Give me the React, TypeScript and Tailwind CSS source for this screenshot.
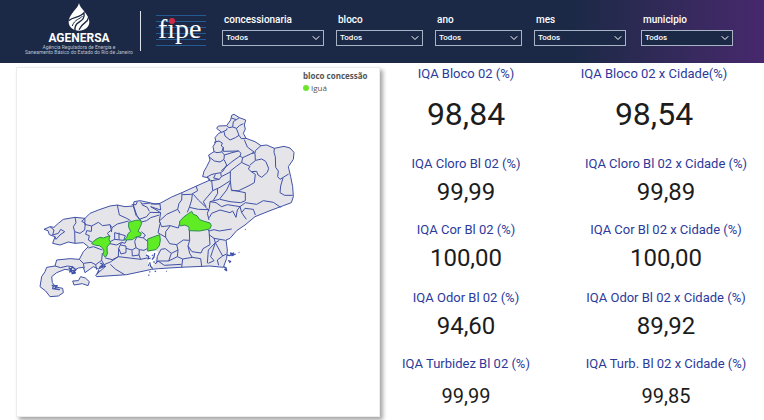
import { ChevronDown } from 'lucide-react'

const FILTERS = [
  { id: 'concessionaria', width: 'w-[102px]', margin: '' },
  { id: 'bloco', width: 'w-[87px]', margin: '' },
  { id: 'ano', width: 'w-[87px]', margin: '' },
  { id: 'mes', width: 'w-[92px]', margin: '' },
  { id: 'municipio', width: 'w-[92px]', margin: 'ml-[3px]' },
]

const ROWS = [
  {
    bloco: ['IQA Bloco 02 (%)', '98,84'],
    cidade: ['IQA Bloco 02 x Cidade(%)', '98,54'],
    row: 'h-[90px]',
    value: 'text-[32px] leading-10 mt-3',
    shift: 'pr-6',
  },
  {
    bloco: ['IQA Cloro Bl 02 (%)', '99,99'],
    cidade: ['IQA Cloro Bl 02 x Cidade (%)', '99,89'],
    row: 'h-[66px]',
    value: 'text-2xl mt-1',
    shift: '',
  },
  {
    bloco: ['IQA Cor Bl 02 (%)', '100,00'],
    cidade: ['IQA Cor Bl 02 x Cidade (%)', '100,00'],
    row: 'h-[68px]',
    value: 'text-2xl mt-1',
    shift: '',
  },
  {
    bloco: ['IQA Odor Bl 02 (%)', '94,60'],
    cidade: ['IQA Odor Bl 02 x Cidade (%)', '89,92'],
    row: 'h-[66px]',
    value: 'text-2xl mt-1',
    shift: '',
  },
  {
    bloco: ['IQA Turbidez Bl 02 (%)', '99,99'],
    cidade: ['IQA Turb. Bl 02 x Cidade (%)', '99,85'],
    row: 'h-[56px]',
    value: 'text-xl leading-8 mt-2',
    shift: '',
  },
]

export default function App() {
  return (
    <div className="min-h-screen flex flex-col bg-white font-['Roboto','Liberation_Sans',sans-serif]">
      <Header />
      <main className="flex-1 grid grid-cols-[95fr_96fr]">
        <div className="pl-4 pt-1 pb-[3px] flex">
          <MapCard />
        </div>
        <section className="pt-[3px]">
          {ROWS.map(r => (
            <div key={r.bloco[0]} className={`grid grid-cols-[43fr_53fr] ${r.row}`}>
              <Metric label={r.bloco[0]} value={r.bloco[1]} size={r.value} />
              <div className={`pl-4 ${r.shift}`}>
                <Metric label={r.cidade[0]} value={r.cidade[1]} size={r.value} />
              </div>
            </div>
          ))}
        </section>
      </main>
    </div>
  )
}

function Header() {
  return (
    <header className="h-[63px] flex items-start text-white bg-linear-to-r from-[#1b2946] from-75% to-[#47286d]">
      <div className="w-[130px] ml-[14px] pt-[3px] flex flex-col items-center">
        <AgenersaMark />
        <div className="text-xs leading-3 font-bold mt-px">AGENERSA</div>
        <p className="text-[5px] leading-[5px] text-center text-[#b9c2d2] mt-px whitespace-nowrap">
          Agência Reguladora de Energia e<br />
          Saneamento Básico do Estado do Rio de Janeiro
        </p>
      </div>
      <div className="w-px h-10 mt-[11px] -ml-1 bg-[#dfe4ec]" />
      <FipeLogo />
      <form className="flex gap-3 ml-4 pt-[14px]">
        {FILTERS.map(f => (
          <div key={f.id} className={`${f.width} ${f.margin}`}>
            <label htmlFor={f.id} className="block text-[10px] leading-3 font-medium pl-0.5 mb-1">{f.id}</label>
            <div className="relative">
              <select id={f.id} className="block appearance-none w-full h-4 px-[3px] border border-[#a9b3c6] bg-[#1b2946] text-[8px] leading-3 font-medium text-white">
                <option>Todos</option>
              </select>
              <ChevronDown className="absolute right-0.5 top-0.5 size-3 pointer-events-none" strokeWidth={2} />
            </div>
          </div>
        ))}
      </form>
    </header>
  )
}

function AgenersaMark() {
  return (
    <svg viewBox="0 0 66 84" className="w-[22px] h-7" aria-hidden="true">
      <path d="M33 0C31 16 2 34 2 56c0 16 14 27 31 27s31-11 31-27C64 34 35 16 33 0Z" fill="#fff" />
      <g fill="none" stroke="#1b2946" strokeLinecap="round">
        <path d="M4 52C16 41 37 45 48 29C51 48 41 52 31 59C24 64 20 71 21 81" strokeWidth="4" />
        <path d="M43 40C36 49 20 48 13 68" strokeWidth="3" />
        <path d="M61 44C60 60 44 56 34 79" strokeWidth="4" />
      </g>
    </svg>
  )
}

function FipeLogo() {
  return (
    <svg viewBox="0 0 50 34" className="w-[50px] h-[34px] ml-[15px] mt-[14px]" role="img" aria-label="fipe">
      <path d="M0 1.5h50M0 7.5h50M0 13.5h50M0 19.5h50M0 25.5h50M0 31.5h50" stroke="#245c92" strokeWidth="1" />
      <text x="2" y="24" fill="#fff" fontSize="28" fontFamily="Liberation Serif, serif">fipe</text>
      <circle cx="16" cy="7" r="3" fill="#d12b45" />
    </svg>
  )
}

function Metric({ label, value, size }: { label: string; value: string; size: string }) {
  return (
    <div className="text-center">
      <h2 className="text-[13px] leading-4 text-[#2c3a9b] whitespace-nowrap">{label}</h2>
      <div className={`text-[#1c1c1c] ${size}`}>{value}</div>
    </div>
  )
}

function MapCard() {
  return (
    <section className="flex-1 bg-white border border-[#ececec] shadow-[3px_3px_4px_#a8a8a8]">
      <div className="w-[76px] ml-auto pt-0.5 text-[8px] leading-3 text-[#555] font-['Open_Sans',sans-serif] whitespace-nowrap">
        <h2 className="font-bold">bloco concessão</h2>
        <div className="flex items-center gap-0.5">
          <span className="size-1.5 rounded-full bg-[#6de52b]" />
          Iguá
        </div>
      </div>
      <RioMap />
    </section>
  )
}

function RioMap() {
  return (
    <svg viewBox="0 0 840 615" className="w-[280px] ml-[13px] mt-[11px]" role="img" aria-label="Mapa do estado do Rio de Janeiro">
      <g stroke="#4052a8" strokeWidth="3" strokeLinejoin="round" fill="none">
        <path
          fill="#e5e4e8"
          d="M612 28L628 38L647 45L643 60L646 72L640 85L648 100L675 110L693 122L710 120L733 130L762 124L780 129L792 142L790 163L775 185L782 215L788 245L790 275L784 293L760 302L720 317L675 335L645 360L620 377L600 400L588 405L592 435L590 460L580 487L540 483L450 487L385 491L365 493L290 509L200 515L197 510L228 483L205 492L190 485L165 503L160 487L145 489L130 497L105 493L80 503L65 515L67 533L77 546L98 550L100 563L85 573L60 575L47 558L30 545L35 515L45 500L50 487L75 483L80 465L120 461L148 463L160 440L175 425L160 413L135 415L115 411L90 420L68 415L75 395L58 389L54 377L42 373L60 365L72 367L85 355L100 343L135 337L165 340L180 325L205 315L240 303L262 300L285 305L310 303L312 290L330 287L350 291L375 297L390 295L425 276L458 262L495 245L540 225L535 218L518 215L522 199L530 185L540 165L536 150L552 140L549 125L558 110L555 98L566 85L575 82L560 70L565 63L590 62L602 45L605 31Z"
        />
        {/* oeste */}
        <g transform="translate(0 225)">
          <path d="M60 140L72 150L68 165L85 160L92 148L104 155L90 165L78 178L75 170M135 112L138 128L130 140L134 155L150 160L164 150L166 130L155 124L165 115M134 155L135 190M165 115L164 133L185 138L205 127L218 137L240 134L244 150L232 160L240 170M185 138L184 154L170 152L167 163L178 167L175 180L187 187M262 75L268 105L290 115L302 122M246 143L240 134M246 143L262 132L296 123M310 78L318 106L333 122M246 143L244 156M254 158V178L281 181L286 167L254 158M267 158V179M254 178L240 185M240 191L260 195L275 187L266 205L265 230L247 239L226 234M275 187L285 190L290 180M272 195L288 198V218L273 222L266 205M288 205L306 210L318 203L328 209L327 225L307 228L306 211M318 203L314 184L321 170L340 174M334 155L346 165L340 174L353 184M327 225L332 238L365 231M217 210L190 200L175 204M148 238L160 250L183 247L197 254L215 241L217 219M160 250L163 265M197 254L200 269M75 258L92 263L112 258L127 260M215 241L222 254L241 246L265 230L332 238M241 253L257 268L284 284M328 209L342 211L351 206M360 228L367 268" />
          <path fill="#e5e4e8" d="M128 303L145 302L152 290L166 294L178 305L174 317L157 311L132 315Z" />
          <path strokeWidth="4" d="M116 263l7 5l-4 8l11-5l6 8l-10 2l12-12l-11-9l-5 12l8 10M65 315l8 3l9-1l-8 9l14 3l-20-3l2-10M211 249l8 5l-10 8l16-5M207 269l-6 14" />
        </g>
        {/* norte */}
        <g transform="translate(390 0)">
          <path d="M214 39L229 44L238 38M229 44L220 50L218 66L230 70L238 62L250 56M200 62L207 68L218 66M185 82L200 75L201 70M192 80L195 93L210 105L226 98L237 91L229 70M237 91L244 101L258 100M162 112L177 108L187 114L184 123L190 127L185 141L171 143L162 140M190 127L190 139L236 138L243 145L240 153L248 158L276 145L282 141L262 126L253 104M303 122L286 137L285 144L276 145M148 156L163 168L180 171L192 163L193 149L185 141M193 150L216 143L236 138M193 165L200 180L189 198L182 203L156 208L141 216M182 203L184 215L178 223L161 219L166 208M240 153L216 170L184 197M248 158L245 172L229 184L211 198L211 227M184 215L211 201M141 216L150 228L178 223M245 172L252 176L270 184L265 192L274 200L290 199L294 210L305 217L322 202L326 190L317 169L305 162L287 166L270 180M285 145L286 166M286 208L283 233L267 242L236 257M286 208L274 200M343 130L342 142L346 155L347 187L355 198L353 215L360 223L386 207M369 219L362 243L360 263L374 271L398 271" />
        </g>
        {/* centro */}
        <g transform="translate(300 195)">
          <path d="M156 67L155 90L147 100L143 118L150 130M198 48L203 62L184 73L157 74M187 72L185 90L178 112L172 127M190 73L205 90L228 112L237 122M178 112L205 118L237 119M245 30L248 62L220 95L228 110M301 32L270 52L248 62M301 36L290 60L268 88L240 95M262 56L263 70L250 91M301 32L304 60L346 68V92L332 98L300 95L270 88M304 62L326 62M240 95L238 115L232 130L237 150M240 95L258 98L275 110L292 104L330 110M330 110L346 98L380 103L400 92L430 97L452 112M330 110L322 120L318 142L308 123L300 128L270 120L245 130L238 143M330 110L335 128L345 115L370 118L376 135M335 128L349 148M10 105L20 135L28 147M5 104L18 104L22 95M31 95L36 102L60 99M35 104L52 112L58 124M62 102L90 102L92 120L62 110L92 128L60 127L50 140L28 148M92 128L88 153L92 162M88 153L110 133L143 118M30 157L50 152L62 143L88 135" />
        </g>
        {/* leste */}
        <g transform="translate(300 255)">
          <path d="M88 93L95 110L121 107L145 114L151 93M121 107L107 125L107 142L119 161L140 164L160 150L179 151L178 116M90 102L84 128L92 133L108 142M140 164L144 180L124 190L106 176L93 178L82 199M179 151L174 168L186 185L213 189L219 176L240 164L237 123M237 99L230 114L237 123L252 119L268 123L305 117M237 134L252 145L287 151M252 145L256 158L235 180L232 220M256 158L278 198L289 192M268 151L256 158L247 185L242 200L252 212L235 220M278 198L262 210L266 226M144 180L142 200L116 213L84 213L75 222M124 190L116 213M142 200L158 207L155 232M158 207L187 202L212 206L215 228M174 168L179 190L187 202M84 213L103 226L154 223M82 199L80 220" />
          <path strokeWidth="4" d="M291 195l8 2l12-8l-5 8l11-5M300 189l8 2M294 212l8 2l-4 4M281 230l7 4l2 8l-7-5M288 232v11M326 187l2 1M345 118l2 1M108 244h2" />
        </g>
        {/* baía de Guanabara */}
        <path fill="#fff" stroke="none" d="M350 443L378 436L384 444L376 462L366 492L360 488L352 460Z" />
        <path strokeWidth="4" d="M348 450l8 4l-2 8l8-3M374 444l-2 12l-6 8M359 472l3 12l5 6M370 470l4 2M366 450l2 2M354 480l3 1M358 500l3 1M355 510l3 1M374 498l4 2" />
        {/* municípios da Iguá */}
        <g fill="#5fec24" stroke="#2f8b55">
          <path d="M187 412L198 403L210 397L220 399L239 392L237 405L242 411L236 421L231 425L232 447L226 457L219 448L222 438L217 428L208 422L197 421L185 416Z" />
          <path d="M296 352L317 346L331 345L335 355L330 367L324 379L334 385L331 393L318 396L307 404L282 405L290 398L294 386L302 379L296 367Z" />
          <path d="M353 402L372 395L389 389L391 405L388 422L378 434L353 438Z" />
          <path d="M449 349L461 336L475 326L485 319L490 328L501 332L509 344L520 348L540 354L544 362L539 372L509 378L477 377L477 366L465 360L449 363Z" />
        </g>
      </g>
    </svg>
  )
}
